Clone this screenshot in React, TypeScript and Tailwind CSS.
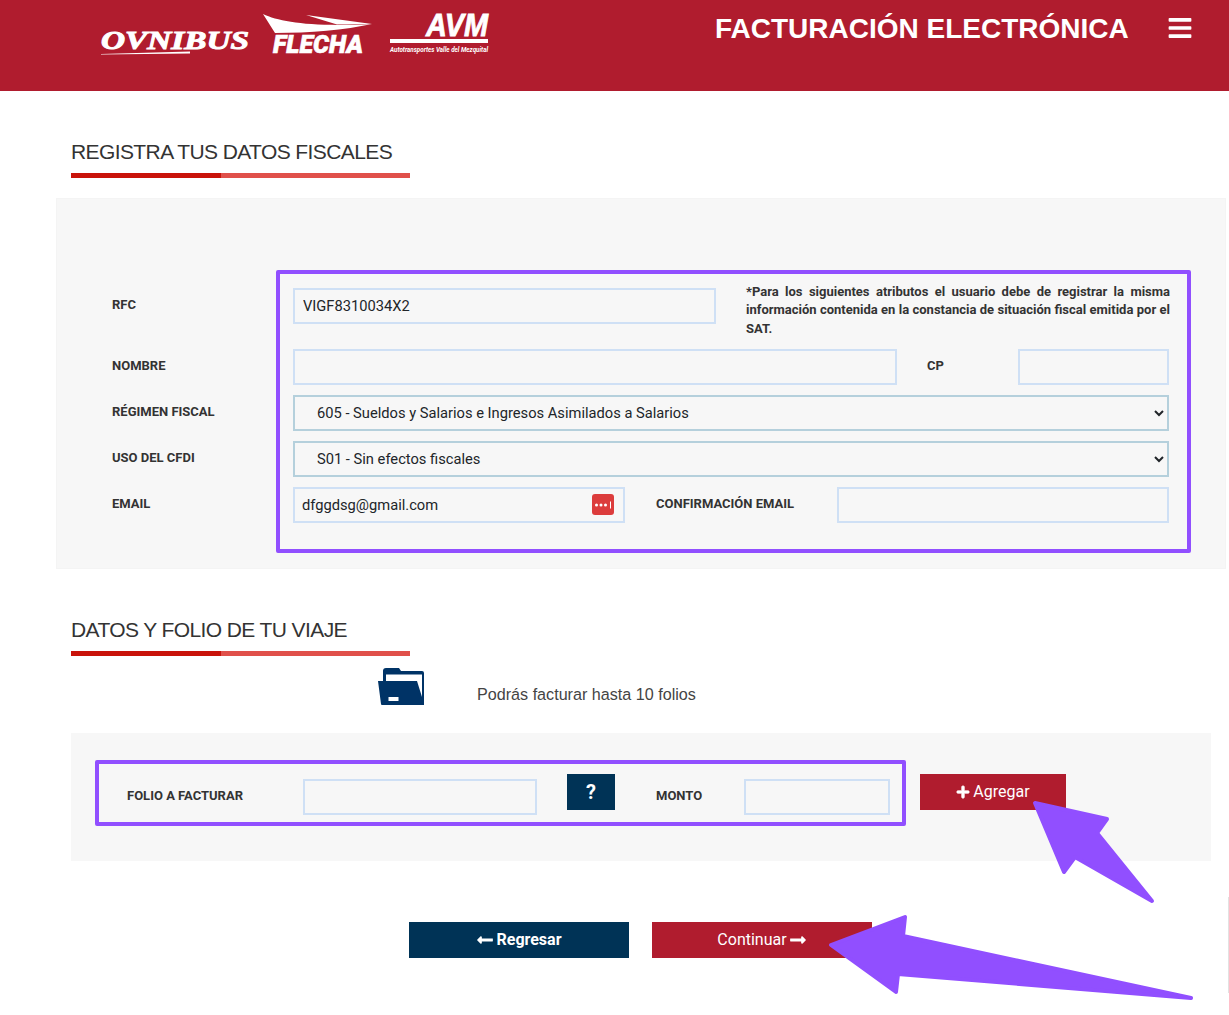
import { FaBars, FaLongArrowAltLeft, FaLongArrowAltRight, FaPlus } from "react-icons/fa";

const inputCls =
  "h-[36px] border-2 border-[#cfe0f5] bg-transparent text-[14.700px] text-[#212529] outline-none [font-family:Roboto,sans-serif]";
const selectCls =
  "h-[36px] w-[876px] border-2 border-[#b5d0dc] bg-transparent pl-[18px] text-[14.700px] text-[#212529] outline-none [font-family:Roboto,sans-serif]";
const labelCls = "text-[13px] font-bold leading-[18px] text-[#333333] [font-family:Roboto,sans-serif]";

const Logos = () => (
  <svg width="392" height="60" viewBox="100 0 392 60" fill="#fff">
    <text
      x="101"
      y="49"
      fontFamily="Liberation Serif, serif"
      fontStyle="italic"
      fontWeight="700"
      fontSize="26"
      textLength="148"
      lengthAdjust="spacingAndGlyphs"
      stroke="#fff"
      strokeWidth="1"
    >
      OVNIBUS
    </text>
    <path d="M101 54 L190 51.500 L190 53.500 L101 54.500 Z" />
    <path d="M263 14 C280 22 310 27 372 24 C345 30 310 33 275 33 Z" />
    <path d="M306 15 L372 24 L337 24.500 Z" />
    <text
      x="273"
      y="53"
      fontFamily="Roboto, sans-serif"
      fontWeight="900"
      fontStyle="italic"
      fontSize="25"
      textLength="90"
      lengthAdjust="spacingAndGlyphs"
      stroke="#fff"
      strokeWidth="0.6"
    >
      FLECHA
    </text>
    <text
      x="426"
      y="36"
      fontFamily="Liberation Sans, sans-serif"
      fontWeight="700"
      fontStyle="italic"
      fontSize="31"
      textLength="62"
      lengthAdjust="spacingAndGlyphs"
      stroke="#fff"
      strokeWidth="0.8"
    >
      AVM
    </text>
    <rect x="390" y="39" width="98" height="4" />
    <text
      x="390"
      y="52"
      fontFamily="Roboto, sans-serif"
      fontWeight="700"
      fontStyle="italic"
      fontSize="6.500"
      textLength="98"
      lengthAdjust="spacingAndGlyphs"
    >
      Autotransportes Valle del Mezquital
    </text>
  </svg>
);

const Heading = ({ title }: { title: string }) => (
  <div className="ml-[71px] mt-[47px] w-[339px]">
    <h2 className="h-[28px] whitespace-nowrap text-[21px] leading-[28px] tracking-[-0.6px] text-[#333333] [font-family:'Liberation_Sans',sans-serif]">
      {title}
    </h2>
    <div className="mt-[7px] flex h-[5px]">
      <div className="w-[150px] bg-[#c9130a]" />
      <div className="flex-1 bg-[#e0504a]" />
    </div>
  </div>
);

const FolderIcon = () => (
  <svg width="46" height="37" viewBox="0 0 46 37">
    <path d="M5 3 Q5 0 8 0 H21 L23 3 H44 Q46 3 46 5 V37 H4 Q3 37 3 36 L0 13 H5 Z" fill="#003366" />
    <path d="M8 6.500 H44 V29 L39 13 H8 Z" fill="#fff" />
    <rect x="10.500" y="29" width="10" height="4" fill="#fff" />
  </svg>
);

const PasswordBadge = () => (
  <svg className="absolute right-[11px] top-[7px]" width="22" height="22" viewBox="0 0 22 22">
    <rect width="22" height="21" rx="3" fill="#dc3c3c" />
    <circle cx="4.500" cy="11" r="1.500" fill="#fff" />
    <circle cx="9" cy="11" r="1.500" fill="#fff" />
    <circle cx="13.500" cy="11" r="1.500" fill="#fff" />
    <rect x="18" y="7.500" width="1" height="7" fill="#fff" />
  </svg>
);

const Arrows = () => (
  <svg className="pointer-events-none absolute left-0 top-0" width="1229" height="1015" viewBox="0 0 1229 1015">
    <path
      d="M1035 803 L1107 819 L1097 833 L1152 901 L1075 857 L1064 872 Z"
      fill="#914fff"
      stroke="#914fff"
      strokeWidth="4"
      strokeLinejoin="round"
    />
    <path
      d="M831 945 L905 917 L903 936 L1191 998 L898 974 L896 992 Z"
      fill="#914fff"
      stroke="#914fff"
      strokeWidth="4"
      strokeLinejoin="round"
    />
  </svg>
);

export default function App() {
  return (
    <div className="relative h-[1015px] w-[1229px] overflow-hidden bg-white">
      <header className="flex h-[91px] items-start bg-[#b01c2e] pl-[100px]">
        <Logos />
        <h1 className="ml-[223px] mt-[12px] whitespace-nowrap text-[28px] font-bold leading-[34px] text-white [font-family:'Liberation_Sans',sans-serif]">
          FACTURACIÓN ELECTRÓNICA
        </h1>
        <FaBars className="ml-[38px] mt-[15px] text-white" size={26} />
      </header>

      <Heading title="REGISTRA TUS DATOS FISCALES" />

      <section className="ml-[56px] mt-[20px] flex h-[371px] w-[1170px] bg-[#f7f7f7] pt-[72px] shadow-[inset_0_0_0_1px_#f4f4f4]">
        <div className="w-[220px] pl-[56px] pt-[26px]">
          <div className={`h-[61px] ${labelCls}`}>RFC</div>
          <div className={`h-[46px] ${labelCls}`}>NOMBRE</div>
          <div className={`h-[46px] ${labelCls}`}>RÉGIMEN FISCAL</div>
          <div className={`h-[46px] ${labelCls}`}>USO DEL CFDI</div>
          <div className={labelCls}>EMAIL</div>
        </div>
        <div className="h-[283px] w-[915px] rounded-[2px] border-4 border-[#914fff] pl-[13px] pt-[14px]">
          <div className="flex h-[61px] items-start">
            <input className={`${inputCls} w-[423px] pl-[8px]`} value="VIGF8310034X2" readOnly />
            <p className="ml-[30px] mt-[-5.300px] w-[424px] text-justify text-[13px] font-bold leading-[18.500px] text-[#333333] [font-family:Roboto,sans-serif]">
              *Para los siguientes atributos el usuario debe de registrar la misma información contenida en la constancia de situación fiscal emitida por el SAT.
            </p>
          </div>
          <div className="flex h-[46px] items-start">
            <input className={`${inputCls} w-[604px]`} readOnly />
            <span className={`ml-[30px] mt-[8px] w-[91px] ${labelCls}`}>CP</span>
            <input className={`${inputCls} w-[151px]`} readOnly />
          </div>
          <div className="h-[46px]">
            <select className={selectCls} defaultValue="605">
              <option value="605">605 - Sueldos y Salarios e Ingresos Asimilados a Salarios</option>
            </select>
          </div>
          <div className="h-[46px]">
            <select className={selectCls} defaultValue="S01">
              <option value="S01">S01 - Sin efectos fiscales</option>
            </select>
          </div>
          <div className="flex items-start">
            <div className="relative">
              <input className={`${inputCls} w-[332px] pl-[7px]`} value="dfggdsg@gmail.com" readOnly />
              <PasswordBadge />
            </div>
            <span className={`ml-[31px] mt-[8px] w-[181px] ${labelCls}`}>CONFIRMACIÓN EMAIL</span>
            <input className={`${inputCls} w-[332px]`} readOnly />
          </div>
        </div>
      </section>

      <Heading title="DATOS Y FOLIO DE TU VIAJE" />

      <div className="flex h-[77px] items-start pl-[378px] pt-[12px]">
        <FolderIcon />
        <p className="ml-[53px] mt-[14px] text-[16.150px] leading-[24px] text-[#444444] [font-family:'Liberation_Sans',sans-serif]">
          Podrás facturar hasta 10 folios
        </p>
      </div>

      <section className="ml-[71px] flex h-[128px] w-[1140px] items-start bg-[#f7f7f7] pl-[24px] pt-[27px]">
        <div className="flex h-[66px] w-[811px] items-start rounded-[2px] border-4 border-[#914fff] pl-[28px]">
          <span className={`mt-[23px] w-[176px] ${labelCls}`}>FOLIO A FACTURAR</span>
          <input className={`${inputCls} mt-[15px] w-[234px]`} readOnly />
          <button className="ml-[30px] mt-[10px] h-[36px] w-[48px] bg-[#003356] text-[20px] font-bold text-white [font-family:Roboto,sans-serif]">
            ?
          </button>
          <span className={`ml-[41px] mt-[23px] w-[88px] ${labelCls}`}>MONTO</span>
          <input className={`${inputCls} mt-[15px] w-[146px]`} readOnly />
        </div>
        <button className="ml-[14px] mt-[14px] flex h-[36px] w-[146px] items-center justify-center gap-[3px] bg-[#b01c2e] text-[16px] text-white [font-family:Roboto,sans-serif]">
          <FaPlus size={14} stroke="currentColor" strokeWidth={24} />
          Agregar
        </button>
      </section>

      <div className="mt-[61px] flex gap-[23px] pl-[409px]">
        <button className="flex h-[36px] w-[220px] items-center justify-center gap-[2px] bg-[#003356] text-[16px] font-bold text-white [font-family:Roboto,sans-serif]">
          <FaLongArrowAltLeft size={18} />
          Regresar
        </button>
        <button className="flex h-[36px] w-[220px] items-center justify-center gap-[2px] bg-[#b01c2e] text-[16px] text-white [font-family:Roboto,sans-serif]">
          Continuar
          <FaLongArrowAltRight size={18} />
        </button>
      </div>

      <Arrows />
      <div className="absolute right-0 top-[897px] h-[96px] w-[1px] bg-[#e2e2e2]" />
    </div>
  );
}
